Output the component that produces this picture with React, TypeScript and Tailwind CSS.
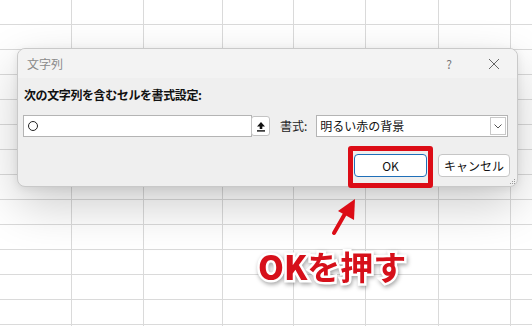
import React from 'react';

const colWidths = [72, 72, 79, 71, 72, 73, 72, 30];
const rowCount = 14;

const SheetGrid: React.FC = () => (
  <div className="flex flex-col">
    {Array.from({ length: rowCount }).map((_, r) => (
      <div key={r} className="flex h-[25px] shrink-0">
        {colWidths.map((w, c) => (
          <div
            key={c}
            className="shrink-0 border-r border-b border-[#dadada] bg-white"
            style={{ width: w }}
          />
        ))}
      </div>
    ))}
  </div>
);

const UploadIcon = () => (
  <svg width="10" height="11" viewBox="0 0 10 11">
    <path d="M5 1 L9 5.5 H6.3 V8 H3.7 V5.5 H1 Z" fill="#111" />
    <rect x="1" y="9.2" width="8" height="1.4" fill="#111" />
  </svg>
);

const App: React.FC = () => {
  return (
    <div className="relative w-[532px] h-[326px] overflow-hidden bg-white font-['Noto_Sans_CJK_JP','Noto_Sans',sans-serif]">
      <SheetGrid />

      {/* Dialog */}
      <div className="absolute left-[17px] top-[48px] w-[501px] h-[139px] rounded-[8px] border border-[#c9c9c9] bg-[#efefef] shadow-[0_18px_48px_rgba(0,0,0,0.2),0_2px_8px_rgba(0,0,0,0.08)] flex flex-col">
        <div className="flex items-center h-[29px] px-[9px] rounded-t-[8px] bg-[#f3f3f3]">
          <span className="text-[12px] text-[#8a8a8a] leading-none">文字列</span>
          <span className="ml-auto mr-[36px] text-[12px] text-[#777] leading-none">?</span>
          <svg width="12" height="12" viewBox="0 0 12 12" className="mr-[8px]">
            <path d="M1 1 L11 11 M11 1 L1 11" stroke="#666" strokeWidth="1" />
          </svg>
        </div>

        <div className="pl-[6px] pt-[11px] text-[12px] font-bold text-[#111] leading-none tracking-[-0.4px]">
          次の文字列を含むセルを書式設定:
        </div>

        <div className="flex items-center mt-[14px] pl-[5px]">
          <div className="flex items-center w-[229px] h-[22px] border border-[#b4b4b4] bg-white pl-[4px]">
            <span className="w-[10px] h-[10px] rounded-full border border-[#222]" />
          </div>
          <div className="flex items-center justify-center w-[19px] h-[20px] -ml-[1px] rounded-[3px] border border-[#c3c3c3] bg-white">
            <UploadIcon />
          </div>
          <span className="ml-[10px] text-[12px] text-[#222]">書式:</span>
          <div className="flex items-center ml-[9px] w-[192px] h-[22px] border border-[#b4b4b4] bg-white pl-[3px] pr-[1px]">
            <span className="text-[12px] text-[#111]">明るい赤の背景</span>
            <div className="ml-auto flex items-center justify-center w-[16px] h-[18px] border border-[#c8c8c8] bg-white">
              <svg width="8" height="5" viewBox="0 0 8 5">
                <path d="M0.5 0.5 L4 4 L7.5 0.5" stroke="#555" strokeWidth="1" fill="none" />
              </svg>
            </div>
          </div>
        </div>

        <div className="flex justify-end mt-[17px] pr-[7px] gap-[11px]">
          <button className="w-[73px] h-[23px] rounded-[4px] border border-[#1f6fb8] bg-white text-[12px] text-[#111]">
            OK
          </button>
          <button className="w-[72px] h-[23px] rounded-[4px] border border-[#c6c6c6] bg-white text-[12px] text-[#111]">
            キャンセル
          </button>
        </div>

        {/* resize grip */}
        <div className="absolute right-[2px] bottom-[2px] grid grid-cols-3 gap-[1px]">
          {[0, 0, 1, 0, 1, 1, 1, 1, 1].map((v, i) => (
            <span key={i} className={`w-[1px] h-[1px] ${v ? 'bg-[#999]' : ''}`} />
          ))}
        </div>
      </div>

      {/* Highlight box */}
      <div className="absolute left-[348px] top-[146px] w-[85px] h-[42px] rounded-[3px] border-[5px] border-[#dc0c16]" />

      {/* Arrow */}
      <svg className="absolute left-[326px] top-[194px]" width="36" height="44" viewBox="0 0 36 44">
        <path d="M8 39 L20 18" stroke="#dc0c16" strokeWidth="4" strokeLinecap="round" />
        <path d="M29 5 L28 26 L12 17 Z" fill="#dc0c16" />
      </svg>

      {/* Annotation */}
      <div className="absolute left-[258px] top-[250px] text-[33px] leading-none text-[#d6101a] [paint-order:stroke_fill] [-webkit-text-stroke:5px_white] [filter:drop-shadow(1px_2px_2px_rgba(0,0,0,0.35))] whitespace-nowrap">
        <span className="font-black">OK</span>
        <span className="font-bold">を押す</span>
      </div>
    </div>
  );
};

export default App;
